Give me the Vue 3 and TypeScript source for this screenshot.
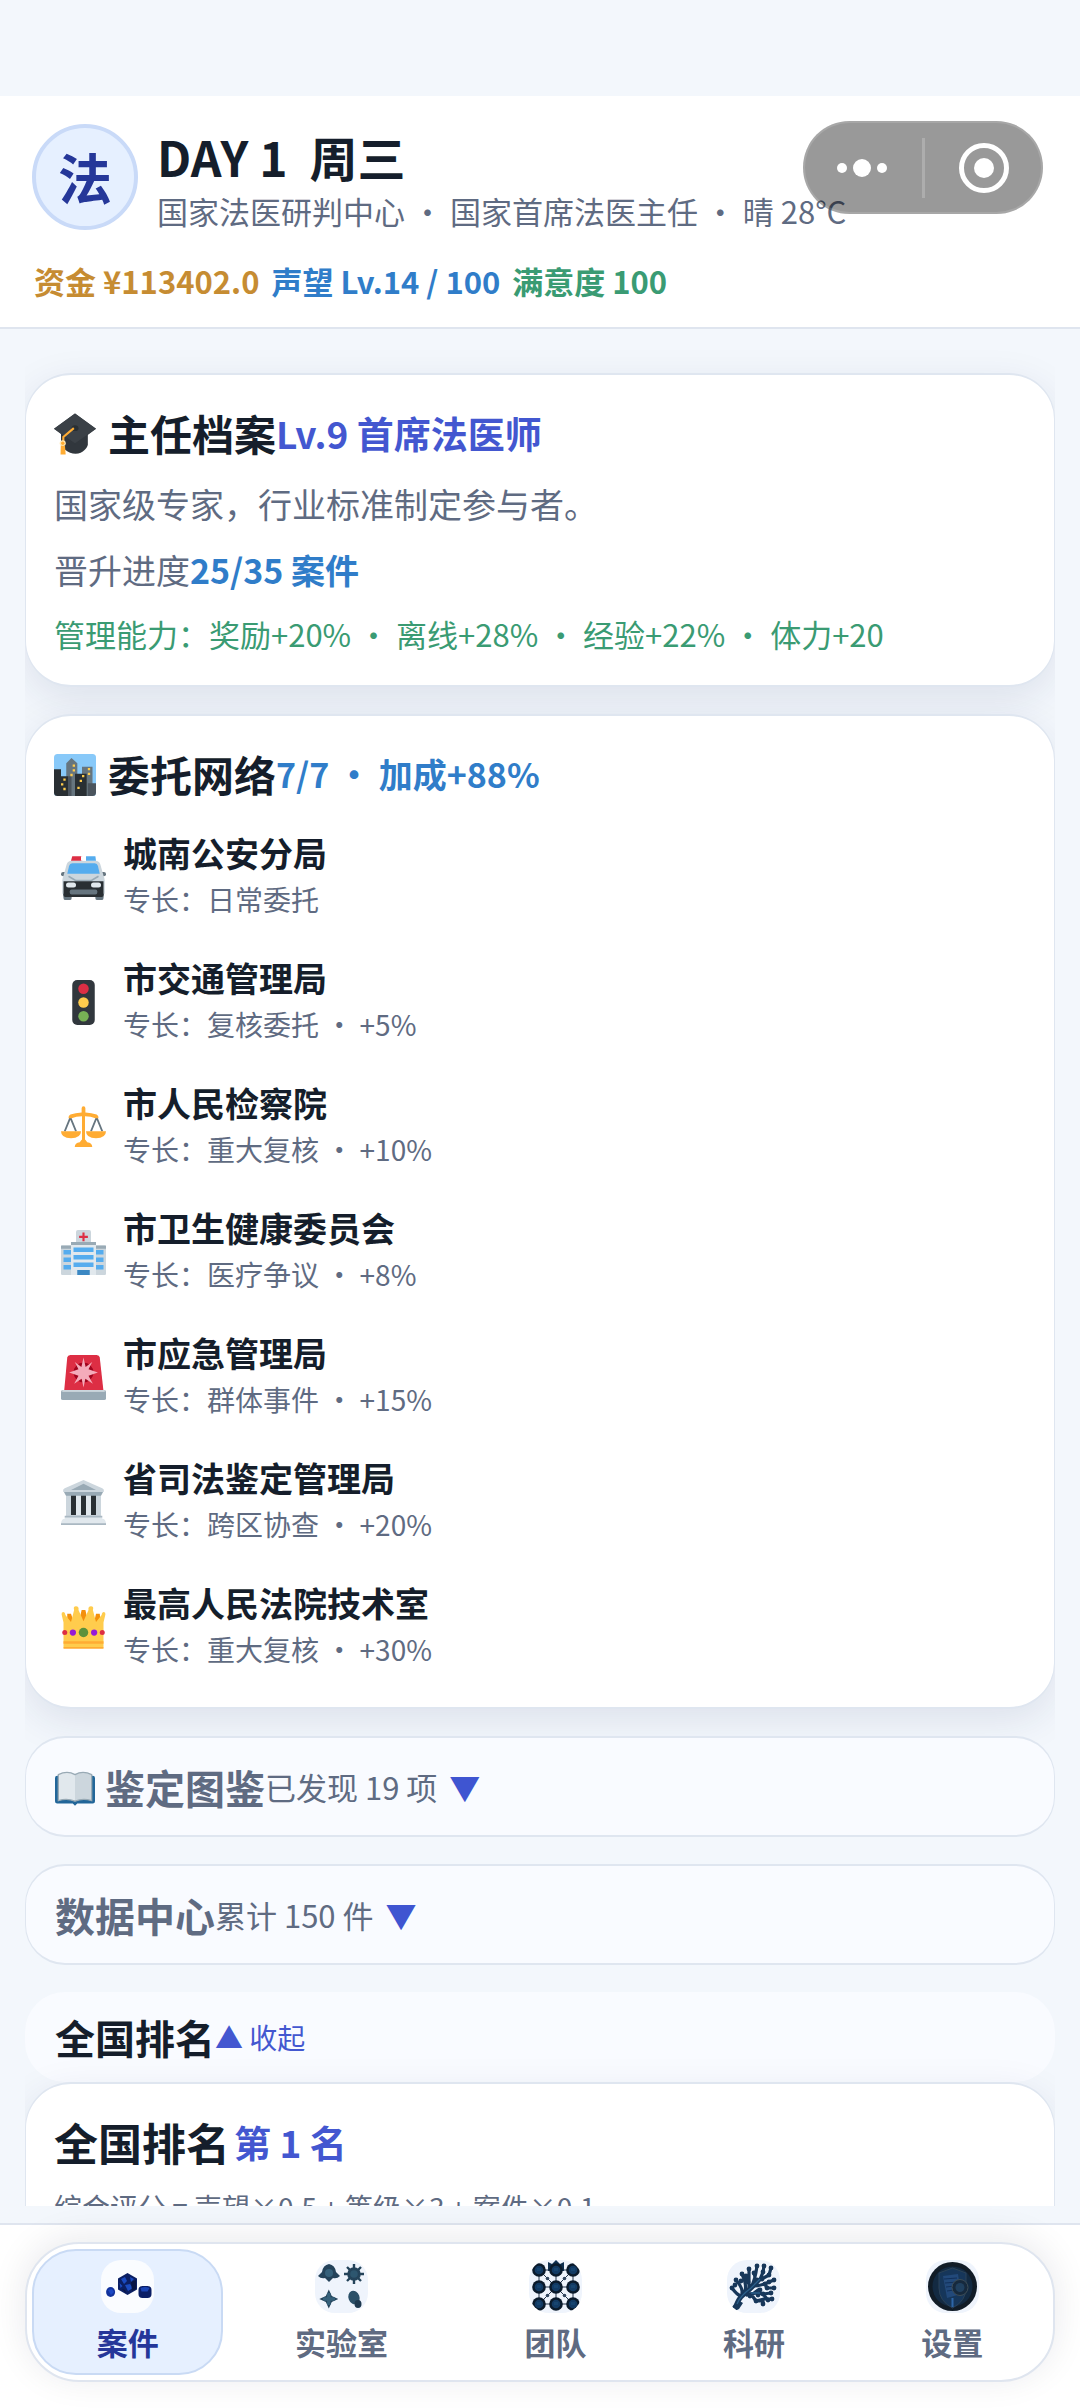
<script setup lang="ts">
import { ref } from 'vue'

interface Agency {
  name: string
  detail: string
  icon: string
}

interface Tab {
  label: string
  icon: string
}

const capIcon = `
<path fill="#31373d" d="M6 17v10c0 2 6 8 12.500 8S29 29 29 27V17z"/>
<path fill="#31373d" d="M18 0.500 36 13.500 18 27 0 13.500z"/>
<path fill="#3b4147" d="M18 0.500 36 13.500 18 26 0 13.500z"/>
<ellipse cx="18" cy="13" rx="3" ry="2.500" fill="#292f33"/>
<path d="M17 13 8 20.500V26" fill="none" stroke="#ffac33" stroke-width="1.800"/>
<circle cx="7.500" cy="26" r="2.600" fill="#ffe8b6"/>
<path fill="#ffac33" d="M5.800 28h3.600l.6 7.500H5.600z"/>
<circle cx="7.500" cy="26" r="1.500" fill="#ffac33"/>`

const cityIcon = `
<rect width="36" height="36" rx="3" fill="#88c9f9"/>
<path fill="#66757f" d="M10.500 8 15 3.500 20 8v28h-9.500zM24 11h9v25h-9z"/>
<path fill="#292f33" d="M0 13h6v6h6v17H3a3 3 0 0 1-3-3zM18 17h10v19H18z"/>
<path fill="#4b545d" d="M12 19h3v17h-3zM29 25h7v8a3 3 0 0 1-3 3h-4z"/>
<path fill="#ffcc4d" d="M16 9h2v2h-2zM16 13h2v2h-2zM14 17h2v2h-2zM29 12h2v2h-2zM29 16h2v2h-2zM24 18h2v2h-2zM22 22h2v2h-2zM20 28h2v2h-2zM8 21h2v2H8zM6 25h2v2H6zM8 29h2v2H8z"/>`

const carIcon = `
<path fill="#66757f" d="M1.500 29h7v5.500q0 1.500-1.500 1.500H3.500Q2 36 2 34.500zM27.500 29h7l-.5 5.500q0 1.500-1.500 1.500H29q-1.500 0-1.500-1.500z"/>
<rect y="13.500" width="5" height="3.500" rx="1.700" fill="#66757f"/>
<rect x="31" y="13.500" width="5" height="3.500" rx="1.700" fill="#66757f"/>
<path fill="#ccd6dd" d="M8.500 4.500h19q3 0 4 3l2.500 9q1 2 1 4V31H1v-10.500q0-2 1-4l2.500-9q1-3 4-3z"/>
<path fill="#55acee" d="M9 6.500h18q2 0 2.500 2l1.500 6.500H5L6.500 8.500Q7 6.500 9 6.500z"/>
<path d="m6 17 6 3.500h12l6-3.500" fill="none" stroke="#99aab5" stroke-width="1.300"/>
<path fill="#292f33" d="M2 21h32v11q0 1.500-1.500 1.500h-29Q2 33.500 2 32z"/>
<rect x="4" y="22" width="8" height="4" rx="2" fill="#e1e8ed"/>
<rect x="24" y="22" width="8" height="4" rx="2" fill="#e1e8ed"/>
<rect x="7" y="27.500" width="22" height="4" rx="1.500" fill="#66757f"/>
<path fill="#dd2e44" d="M9 1h8v3.500H8z"/><path fill="#fff" d="M16 1h4v3.500h-4z"/><path fill="#55acee" d="M20 1h7.500l.5 3.500h-8z"/>`

const lightIcon = `
<rect x="9" width="18" height="36" rx="4" fill="#31373d"/>
<circle cx="18" cy="7" r="4.200" fill="#dd2e44"/>
<circle cx="18" cy="18" r="4.200" fill="#ffcc4d"/>
<circle cx="18" cy="29" r="4.200" fill="#77b255"/>`

const scaleIcon = `
<path d="M7.500 10 3 21m4.500-11 4.500 11m16.500-11L24 21m4.500-11L33 21" fill="none" stroke="#66757f" stroke-width="1.500"/>
<path fill="#ffac33" d="M16.500 2.500a1.500 1.500 0 0 1 3 0V6q5 .3 9 1.500 1.700.7 1.500 3H27.500Q24 9 19.200 9v20H16.800V9Q12 9 8.500 10.500H6q-.2-2.300 1.500-3 4-1.200 9-1.500zM0 21h16q0 5.500-8 5.500T0 21zM20 21h16q0 5.500-8 5.500T20 21zM11 33.500q0-3 4-3.700l1.500-2h3l1.500 2q4 .7 4 3.700z"/>`

const hospitalIcon = `
<rect x="12" width="12" height="12" rx="1.500" fill="#ccd6dd"/>
<path d="M18 2v7m-3.500-3.500h7" stroke="#dd2e44" stroke-width="1.700"/>
<path fill="#ccd6dd" d="M0 13q0-1 1-1h34q1 0 1 1v22q0 1-1 1H1q-1 0-1-1z"/>
<path fill="#e1e8ed" d="M8 10h20v26H8z"/><path fill="#99aab5" d="M0 12.500h8V15H0zM28 12.500h8V15h-8zM8 9.500h20V12H8z"/>
<path fill="#55acee" d="M10 14h16v3.500H10zM10 20h16v3.500H10zM10 26h16v3.500H10zM2 16h6v3.500H2zM2 22h6v3.500H2zM2 28h6v3.500H2zM28 16h6v3.500h-6zM28 22h6v3.500h-6zM28 28h6v3.500h-6z"/>
<path fill="#3b88c3" d="M13 32h10v4H13z"/>`

const sirenIcon = `
<path fill="#dd2e44" d="M5 2q.3-2 2.500-2h21Q30.700 0 31 2l3 27H2.500z"/>
<circle cx="18" cy="14" r="8" fill="#a0041e"/>
<path fill="#f4abba" d="m18 2 1.700 7.500L25 5.500l-3 5.800 7.500 2.700-7.500 2.500 3.500 6.500-6-4L18 26l-1.500-7-6 4 3.500-6.500L6.500 14l7.500-2.700-3-5.800 5.300 4z"/>
<rect y="28" width="36" height="8" rx="1.500" fill="#99aab5"/>
<rect x="1" y="28" width="34" height="1.500" fill="#ccd6dd"/>`

const courtIcon = `
<path fill="#ccd6dd" d="M4 11h28v18H4z"/>
<path fill="#292f33" d="M8 12h4v16H8zM16 12h4v16h-4zM24 12h4v16h-4z"/>
<path fill="#e1e8ed" d="M12 12h4v16h-4zM20 12h4v16h-4z"/>
<path fill="#99aab5" d="M2 9h32l-2 3.500H4z"/>
<path fill="#ccd6dd" d="M18 0 33 6.500q2 1 1 3H2q-1-2 1-3z"/>
<path fill="#99aab5" d="m18 3 10 5H8z"/>
<path fill="#e1e8ed" d="M3 29h30v2q3 0 3 4.500H0Q0 31 3 31z"/>
<path fill="#aab8c2" d="M3 28.500h30V30H3zM0 34.500h36V36H0z"/>`

const crownIcon = `
<path fill="#f4900c" d="M5 7h3l3 9H5zM16.500 4h3l2.500 11h-8zM28 7h3l1 9h-6z"/>
<path fill="#ffcc4d" d="M2 34V14L.5 7.500q-.3-2 1.200-2T3.500 8L8 13.500 10.500 4Q9.500 1 12 1t2 3l4 9 4-9q-.5-3 2-3t1.500 3L28 13.500 32.500 8q.3-2.500 1.800-2.500t1.200 2L34 14v20z"/>
<circle cx="3" cy="22" r="2" fill="#dd2e44"/><circle cx="33" cy="22" r="2" fill="#dd2e44"/>
<circle cx="9.500" cy="22" r="2.500" fill="#9719d6"/><circle cx="26.500" cy="22" r="2.500" fill="#9719d6"/>
<circle cx="18" cy="22" r="3.800" fill="#5c913b"/>
<path fill="#ffac33" d="M2 29h32v2H2zM2 33.500h32V35H2z"/>`

const bookIcon = `
<path fill="#226699" d="M0 8q0-2 2-2h32q2 0 2 2v21q0 2-2 2H20l-2 2-2-2H2q-2 0-2-2z"/>
<path fill="#e1e8ed" d="M3 5Q11 1.500 18 5v24q-7-3-15-.5z"/>
<path fill="#ccd6dd" d="M33 5q-8-3.500-15 0v24q7-3 15-.5z"/>
<path d="M3 5Q11 1 18 5q7-4 15 0v23.500q-8-2.500-15 .5-7-3-15-.5z" fill="none" stroke="#99aab5" stroke-width="1.200"/>`

const agencies: Agency[] = [
  { name: '城南公安分局', detail: '专长：日常委托', icon: carIcon },
  { name: '市交通管理局', detail: '专长：复核委托 ・ +5%', icon: lightIcon },
  { name: '市人民检察院', detail: '专长：重大复核 ・ +10%', icon: scaleIcon },
  { name: '市卫生健康委员会', detail: '专长：医疗争议 ・ +8%', icon: hospitalIcon },
  { name: '市应急管理局', detail: '专长：群体事件 ・ +15%', icon: sirenIcon },
  { name: '省司法鉴定管理局', detail: '专长：跨区协查 ・ +20%', icon: courtIcon },
  { name: '最高人民法院技术室', detail: '专长：重大复核 ・ +30%', icon: crownIcon },
]

const caseTab = `
<path fill="#0b1f63" d="m26.500 13 9.500 5.500v11L26.500 35 17 29.500v-11z"/>
<path fill="#1a4bc0" d="m20 19 4-2 2 4-3 3zM29 17l4 2-3 3zM24 25l5-1 3 4-5 3zM18.500 23l3 3-2 2z"/>
<path fill="#081443" d="m30 22 5-2v9l-4 2zM21 29l3 1 1 3z"/>
<ellipse cx="9.600" cy="32" rx="4.500" ry="5" fill="#12329c"/><path d="m7 30 4-1 2 3-3 3z" fill="#1b48c4"/>
<rect x="37.500" y="26" width="13" height="12" rx="4" fill="#0a1e66"/><path d="M39.500 28q5-2 9 0l-2 3.500h-6z" fill="#1a44b4"/>`

const labTab = `
<path fill="#24435a" d="M14 4q6 1 7 8l4 4q-3 3-7 2l-4 4-4-4q-4 1-7-2l4-4q1-7 7-8z"/>
<circle cx="14" cy="13" r="4" fill="#35607a"/>
<path d="M39 4v20M29 14h20M32 7l14 14M46 7 32 21" stroke="#24435a" stroke-width="2.400"/>
<circle cx="39" cy="14" r="6.800" fill="#24435a"/><circle cx="39" cy="14" r="3.800" fill="#2d566f"/>
<path fill="#24435a" d="m13.800 29.500 3 6.500 6.500 3-6.500 3-3 6.500-3-6.500-6.500-3 6.500-3z"/>
<path d="M13.800 33v12M8 39h12" stroke="#35607a" stroke-width="3.500"/>
<ellipse cx="39" cy="37.500" rx="5.500" ry="7" fill="#2b5068" transform="rotate(-20 39 37.500)"/>
<ellipse cx="43" cy="44" rx="3.500" ry="4" fill="#1e394f"/>`

const teamNodes = [10, 27, 44].flatMap((y) =>
  [10, 27, 44].map(
    (x) =>
      `<circle cx="${x}" cy="${y}" r="6.800" fill="#0a1a2b"/><circle cx="${x}" cy="${y}" r="4.300" fill="#123a63"/><path d="M${x - 2} ${y - 2}h4v3h-4z" fill="#174570"/>`,
  ),
)
const teamTab = `
<path d="M10 10h34v34H10zM27 10v34M10 27h34M14 14l26 26M40 14 14 40" fill="none" stroke="#24344a" stroke-width="1"/>
<path fill="#0f2f4f" d="m19 2 4 2 4-4 4 4 4-2v9H19z"/>
${teamNodes.join('')}
<circle cx="18.500" cy="18.500" r="1.800" fill="#33475f"/><circle cx="35.500" cy="18.500" r="1.800" fill="#33475f"/>
<circle cx="18.500" cy="35.500" r="1.800" fill="#33475f"/><circle cx="35.500" cy="35.500" r="1.800" fill="#33475f"/>`

const researchTips = [
  [30, 6], [37, 6], [44, 8], [22, 9], [15, 14], [9, 20], [5, 28], [8, 25], [19, 16], [27, 13], [36, 12],
  [42, 15], [47, 20], [47, 28], [42, 22], [44, 33], [45, 39], [41, 40], [36, 44], [29, 41], [23, 36], [36, 34], [40, 28],
  [35, 19], [30, 20], [38, 24], [33, 30], [31, 35], [14, 21], [21, 22],
]
  .map(([x, y]) => `<circle cx="${x}" cy="${y}" r="2.400"/>`)
  .join('')
const researchTab = `
<g fill="#17375a">${researchTips}<path d="m5 47 6-7 5 3-4 6q-4 3-7-2z"/></g>
<g fill="none" stroke="#17375a" stroke-linecap="round" stroke-linejoin="round">
<path stroke-width="5" d="M9 46q3-8 7-11t10-9"/>
<path stroke-width="3.200" d="M14 36q-4-1-9-8M15 33q1-5-6-13M18 31q2-6-3-17M24 27q4-6 6-21M29 22l-2-9M25 27q7-3 11-15l1-6M33 20l9-5 2-7M27 26q7 0 15-4l5-2M38 24l2 4 7 0M20 35q7-3 16-1l8-1M36 34l5 6M27 33l4-3M24 34l5 7h7l0 3M29 41l8-2 8 0M21 22l-2-6M22 28V16l0-7"/>
</g>
<path d="M10 44q3-8 14-16l9-9M24 33h9" fill="none" stroke="#2b5f8a" stroke-width="1.300"/>`

const settingsTab = `
<circle cx="26.500" cy="26.500" r="24.500" fill="#111c27"/>
<circle cx="26.500" cy="26.500" r="20" fill="#132a42"/>
<path d="M26.500 8 40 13v15q0 13-13.500 20Q13 41 13 28V13z" fill="#16365a" stroke="#2c4358" stroke-width="1"/>
<path d="m17 16 15-2 3 20-14 4z" fill="#22497a"/>
<path d="m18 19 13-1m-12 5 12-1m-11 5 9-1m-8 5 7-1" stroke="#12305a" stroke-width="1"/>
<circle cx="34" cy="27.500" r="8" fill="#16293d" stroke="#3f4e57" stroke-width="1"/>
<circle cx="34" cy="27.500" r="4.500" fill="#20405f"/>
<path d="M26.500 38v9" stroke="#2d66a8" stroke-width="2"/>`

const tabs: Tab[] = [
  { label: '案件', icon: caseTab },
  { label: '实验室', icon: labTab },
  { label: '团队', icon: teamTab },
  { label: '科研', icon: researchTab },
  { label: '设置', icon: settingsTab },
]

const activeTab = ref(0)
</script>

<template>
  <div class="app">
    <header class="top">
      <div class="identity">
        <div class="avatar">法</div>
        <div>
          <h1 class="day">DAY 1&nbsp; 周三</h1>
          <p class="place">国家法医研判中心 ・ 国家首席法医主任 ・ 晴 28°C</p>
        </div>
      </div>
      <div class="stats">
        <span class="gold">资金 ¥113402.0</span>
        <span class="blue">声望 Lv.14 / 100</span>
        <span class="green">满意度 100</span>
      </div>
      <div class="capsule">
        <button type="button" aria-label="更多">
          <svg width="52" height="20" viewBox="0 0 52 20" fill="#fff">
            <circle cx="6" cy="10" r="5" /><circle cx="26" cy="10" r="9" /><circle cx="46" cy="10" r="5" />
          </svg>
        </button>
        <i class="divider"></i>
        <button type="button" aria-label="关闭">
          <svg width="50" height="50" viewBox="0 0 50 50">
            <circle cx="25" cy="25" r="22.500" fill="none" stroke="#fff" stroke-width="5" />
            <circle cx="25" cy="25" r="10" fill="#fff" />
          </svg>
        </button>
      </div>
    </header>

    <main class="scroll">
      <section class="card profile">
        <h2 class="heading">
          <svg class="emoji" viewBox="0 0 36 36" v-html="capIcon"></svg>
          <span>主任档案</span><span class="level">Lv.9 首席法医师</span>
        </h2>
        <p class="line">国家级专家，行业标准制定参与者。</p>
        <p class="line">晋升进度<b class="blue">25/35 案件</b></p>
        <p class="perks">管理能力：奖励+20% ・ 离线+28% ・ 经验+22% ・ 体力+20</p>
      </section>

      <section class="card network">
        <h2 class="heading">
          <svg class="emoji" viewBox="0 0 36 36" v-html="cityIcon"></svg>
          <span>委托网络</span><span class="bonus">7/7 ・ 加成+88%</span>
        </h2>
        <ul class="agencies">
          <li v-for="agency in agencies" :key="agency.name" class="agency">
            <svg class="badge" viewBox="0 0 36 36" v-html="agency.icon"></svg>
            <div>
              <h3>{{ agency.name }}</h3>
              <p>{{ agency.detail }}</p>
            </div>
          </li>
        </ul>
      </section>

      <button type="button" class="fold">
        <svg class="book" viewBox="0 0 36 36" v-html="bookIcon"></svg>
        <strong>鉴定图鉴</strong><span>已发现 19 项</span><span class="arrow">▼</span>
      </button>
      <button type="button" class="fold">
        <strong>数据中心</strong><span>累计 150 件</span><span class="arrow">▼</span>
      </button>

      <div class="ranking">
        <button type="button" class="unfold">
          <strong>全国排名</strong><span>▲ 收起</span>
        </button>
        <section class="card">
          <h2 class="heading standing">
            <span>全国排名</span><span class="rank">第 1 名</span>
          </h2>
          <p class="formula">综合评分 = 声望×0.5 + 等级×3 + 案件×0.1</p>
        </section>
      </div>
    </main>

    <nav class="bottom">
      <div class="tabs">
        <button
          v-for="(tab, index) in tabs"
          :key="tab.label"
          type="button"
          class="tab"
          :class="{ active: index === activeTab }"
          @click="activeTab = index"
        >
          <svg class="tile" viewBox="0 0 53 53" v-html="tab.icon"></svg>
          <span>{{ tab.label }}</span>
        </button>
      </div>
    </nav>
  </div>
</template>

<style>
body {
  background: #f3f7fc;
}
</style>

<style scoped>
.app {
  display: flex;
  flex-direction: column;
  height: 100vh;
  box-sizing: border-box;
  padding-top: 96px;
  overflow: hidden;
  background: #f3f7fc;
  color: #151e2b;
  font-family: 'Noto Sans CJK SC', 'Noto Sans', sans-serif;
}

.app * {
  box-sizing: border-box;
}

h1,
h2,
h3,
p,
ul {
  margin: 0;
  padding: 0;
}

button {
  margin: 0;
  border: 0;
  background: none;
  color: inherit;
  font-family: inherit;
  cursor: pointer;
}

.blue {
  color: #307dc9;
}

.gold {
  color: #c68c32;
}

.green {
  color: #3a9b73;
}

.top {
  position: relative;
  flex: none;
  padding: 26px 32px 24px;
  border-bottom: 2px solid #dfe5ef;
  background: #fff;
}

.identity {
  display: flex;
  align-items: center;
  gap: 19px;
}

.avatar {
  flex: none;
  width: 106px;
  height: 106px;
  border: 4px solid #c9daf8;
  border-radius: 50%;
  background: #e6f0ff;
  color: #253799;
  font-size: 54px;
  font-weight: 700;
  line-height: 98px;
  text-align: center;
}

.day {
  font-size: 48px;
  line-height: 68px;
}

.place {
  color: #5f6b82;
  font-size: 31px;
  line-height: 42px;
}

.stats {
  display: flex;
  gap: 12px;
  margin-top: 27px;
  padding-left: 2px;
  font-size: 31px;
  font-weight: 700;
  line-height: 44px;
}

.capsule {
  position: absolute;
  top: 25px;
  right: 37px;
  display: flex;
  align-items: center;
  width: 240px;
  height: 93px;
  border-radius: 47px;
  background: rgba(0, 0, 0, 0.4);
  box-shadow: inset 0 0 0 2px rgba(255, 255, 255, 0.14);
}

.capsule button {
  display: flex;
  flex: 1;
  justify-content: center;
  padding: 0;
}

.divider {
  width: 3px;
  height: 60px;
  background: rgba(255, 255, 255, 0.2);
}

.scroll {
  display: flex;
  flex: 1;
  flex-direction: column;
  gap: 27px;
  min-height: 0;
  margin: 0 25px 17px;
  padding-top: 44px;
  overflow: hidden;
}

.scroll > * {
  flex: none;
}

.card {
  padding: 28px 28px 27px;
  border: 2px solid #dfe6f0;
  border-width: 2px 1px;
  border-radius: 46px;
  background: #fff;
  box-shadow: 0 12px 40px rgba(31, 41, 90, 0.1);
}

.heading {
  display: flex;
  align-items: center;
  font-size: 42px;
  line-height: 60px;
}

.standing {
  gap: 4px;
  font-size: 44px;
}

.emoji {
  width: 42px;
  height: 42px;
  margin: 2px 12px 0 0;
}

.level,
.rank {
  color: #4357d0;
  font-size: 37px;
}

.bonus {
  color: #307dc9;
  font-size: 34px;
}

.profile {
  display: flex;
  flex-direction: column;
  gap: 16px;
  padding-bottom: 28px;
}

.line {
  color: #5f6b82;
  font-size: 34px;
  line-height: 50px;
}

.perks {
  color: #3a9b73;
  font-size: 31px;
  line-height: 46px;
}

.agencies {
  display: flex;
  flex-direction: column;
  gap: 33px;
  margin-top: 24px;
  padding-bottom: 10px;
  list-style: none;
}

.agency {
  display: flex;
  align-items: center;
  gap: 17px;
  padding-left: 7px;
}

.badge {
  width: 45px;
  height: 45px;
  margin-top: 6px;
}

.agency h3 {
  font-size: 34px;
  line-height: 50px;
}

.agency p {
  color: #5f6b82;
  font-size: 28px;
  line-height: 42px;
}

.fold {
  display: flex;
  align-items: center;
  height: 101px;
  padding: 0 29px;
  border: 2px solid #dfe6f0;
  border-width: 2px 1px;
  border-radius: 40px;
  background: #f9fbff;
  color: #5f6b82;
  font-size: 31px;
}

.fold strong,
.unfold strong {
  font-size: 40px;
}

.book {
  width: 40px;
  height: 40px;
  margin: 4px 10px 0 0;
}

.arrow {
  margin-left: 12px;
  color: #3f55d1;
}

.unfold {
  display: flex;
  align-items: center;
  width: 100%;
  height: 90px;
  padding: 0 30px;
  border-radius: 40px;
  background: #f9fbff;
  color: #4357d0;
  font-size: 28px;
}

.unfold strong {
  color: #151e2b;
}

.formula {
  margin-top: 14px;
  color: #5f6b82;
  font-size: 28px;
  line-height: 42px;
}

.bottom {
  flex: none;
  padding: 17px 25px 26px;
  border-top: 2px solid #dfe5ef;
  background: #fff;
}

.tabs {
  display: flex;
  gap: 7px;
  padding: 5px;
  border: 2px solid #dfe5ef;
  border-radius: 54px;
  background: #fff;
  box-shadow: 0 -4px 36px rgba(15, 23, 42, 0.09);
}

.tab {
  display: flex;
  flex: 1 1 auto;
  flex-direction: column;
  align-items: center;
  gap: 7px;
  padding: 9px 0;
  border: 2px solid transparent;
  border-radius: 44px;
  color: #5f6b82;
  font-size: 31px;
  font-weight: 700;
  line-height: 44px;
}

.tile {
  width: 53px;
  height: 53px;
  border-radius: 20px;
  background: #eff4fc;
}

.tab.active {
  border-color: #c9daf4;
  background: #e6f0ff;
  color: #253799;
}

.active .tile {
  background: #fafcff;
}
</style>
